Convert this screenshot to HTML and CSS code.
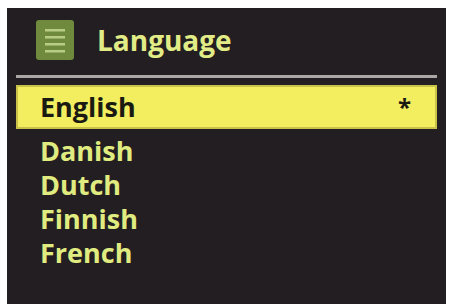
FILE: index.html
```html
<!DOCTYPE html>
<html>
<head>
<meta charset="utf-8">
<link rel="stylesheet" href="styles.css">
</head>
<body>
<div class="screen">
  <div class="header">
    <div class="icon">
      <svg width="38" height="40" viewBox="0 0 38 40">
        <rect x="0" y="0" width="38" height="40" rx="3" fill="#6f8a3c"/>
        <rect x="9" y="9" width="20" height="2.5" fill="#b9cc86"/>
        <rect x="9" y="16" width="20" height="2.5" fill="#b9cc86"/>
        <rect x="9" y="23" width="20" height="2.5" fill="#b9cc86"/>
        <rect x="9" y="30" width="20" height="2.5" fill="#b9cc86"/>
      </svg>
    </div>
    <div class="title">Language</div>
  </div>
  <div class="sep"></div>
  <div class="list">
    <div class="item selected"><span>English</span><span class="star">*</span></div>
    <div class="item">Danish</div>
    <div class="item">Dutch</div>
    <div class="item">Finnish</div>
    <div class="item">French</div>
  </div>
</div>
</body>
</html>
```
FILE: styles.css
```css
html, body {
  margin: 0;
  padding: 0;
  background: #ffffff;
}
body {
  width: 449px;
  height: 304px;
  overflow: hidden;
  font-family: "Open Sans", "Noto Sans", sans-serif;
  font-weight: 700;
}
.screen {
  margin: 8px 3px 0 7px;
  height: 296px;
  background: #221e21;
  box-sizing: border-box;
  padding-top: 12px;
}
.header {
  display: flex;
  align-items: center;
  padding-left: 29px;
  height: 40px;
  gap: 23px;
}
.icon {
  width: 38px;
  height: 40px;
  display: flex;
}
.title {
  color: #e2ec86;
  font-size: 28px;
  line-height: 40px;
}
.sep {
  margin: 15px 9px 0 9px;
  height: 3px;
  background: #a9a8a6;
}
.list {
  margin-top: 7px;
  display: flex;
  flex-direction: column;
}
.item {
  color: #e0ec80;
  font-size: 27px;
  line-height: 34px;
  height: 34px;
  padding-left: 33px;
}
.item.selected {
  margin: 0 9px 5px 9px;
  height: 44px;
  line-height: 40px;
  box-sizing: border-box;
  background: #f2ee60;
  border: 2px solid #c9c248;
  color: #1b1a12;
  padding-left: 22px;
  padding-right: 24px;
  display: flex;
  justify-content: space-between;
}
.star {
  font-size: 24px;
}
```
